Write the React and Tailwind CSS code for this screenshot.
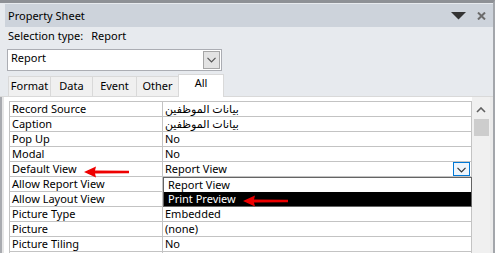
import React from "react";

const rows = [
  ["Record Source", "بيانات الموظفين", true],
  ["Caption", "بيانات الموظفين", true],
  ["Pop Up", "No"],
  ["Modal", "No"],
  ["Default View", "Report View"],
  ["Allow Report View", ""],
  ["Allow Layout View", ""],
  ["Picture Type", "Embedded"],
  ["Picture", "(none)"],
  ["Picture Tiling", "No"],
  ["", ""],
];

function Chevron({ className }) {
  return (
    <svg width="9" height="6" viewBox="0 0 9 6" className={className}>
      <path d="M0.5 0.8 L4.5 4.8 L8.5 0.8" fill="none" stroke="currentColor" strokeWidth="1.2" />
    </svg>
  );
}

function RedArrow({ className }) {
  return (
    <svg width="46" height="12" viewBox="0 0 46 12" className={className}>
      <polygon points="0,6 12,0.5 11,4.5 45,4.8 45,7.2 11,7.5 12,11.5" fill="#ee0000" />
    </svg>
  );
}

export default function App() {
  return (
    <div
      className="relative w-[495px] h-[253px] overflow-hidden bg-[#e7eaee] border-t-[3px] border-t-[#8e9196] border-r-2 border-r-[#a3a6ab] text-[11px] text-black"
      style={{ fontFamily: '"Noto Sans", "DejaVu Sans", sans-serif' }}
    >
      <div className="pt-[1px] pl-[5px]">
        {/* title bar */}
        <div className="h-[23px] bg-[#cdd3db] flex items-center pl-[3px] leading-[23px]">
          <span className="flex-1">Property Sheet</span>
          <svg width="15" height="8" viewBox="0 0 15 8" className="mr-[11px] mt-[1px]">
            <polygon points="0,0 15,0 7.5,7.5" fill="#333" />
          </svg>
          <svg width="9" height="8" viewBox="0 0 9 8" className="mr-[7px] mt-[1px]">
            <path d="M1 0.5 L8 7.5 M8 0.5 L1 7.5" stroke="#6b6b6b" strokeWidth="2" />
          </svg>
        </div>
        {/* selection type */}
        <div className="h-[17px] flex items-center pl-[3px] leading-[17px]">
          <span>Selection type:</span>
          <span className="ml-[8px]">Report</span>
        </div>
        {/* combobox */}
        <div className="mt-[5px] ml-[2px] w-[215px] h-[22px] bg-white border border-[#abadb3] flex items-start">
          <span className="flex-1 pl-[3px] pt-[1px] leading-[14px]">Report</span>
          <div className="mt-[1px] mr-[1px] w-[17px] h-[18px] bg-[#e3e3e3] border border-[#a6a6a6] flex items-center justify-center text-[#555]">
            <Chevron />
          </div>
        </div>
        {/* tabs */}
        <div className="mt-[3px] h-[22px] flex items-end pl-[3px]">
          {[
            ["Format", 42],
            ["Data", 42],
            ["Event", 44],
            ["Other", 42],
          ].map(([t, w]) => (
            <div
              key={t}
              className="h-[20px] bg-[#f0f0f0] border-t border-l border-[#d9d9d9] text-center leading-[14px] pt-[2px]"
              style={{ width: w }}
            >
              {t}
            </div>
          ))}
          <div className="relative z-10 w-[46px] h-[23px] -mb-[1px] bg-white border-t border-l border-r border-[#d9d9d9] text-center leading-[14px] pt-[1px]">
            All
          </div>
        </div>
      </div>
      {/* white content container */}
      <div className="flex border-t border-t-[#d9d9d9] h-[160px]">
        <div className="w-[2px] bg-[#a9abb0]" />
        <div className="w-[2px] bg-[#e6e6e6]" />
        <div className="bg-white pl-[5px] pt-[4px] flex">
          <div className="relative w-[463px] border-t border-l border-r border-[#c3c3c3]">
            {rows.map(([label, value, rtl], i) => (
              <div key={i} className="flex h-[15px] border-b border-[#c3c3c3] leading-[14px]">
                <div className="w-[153px] border-r border-[#c3c3c3] pl-[2px] whitespace-nowrap overflow-hidden">
                  {label}
                </div>
                <div className="relative flex-1 pl-[2px] whitespace-nowrap overflow-hidden">
                  {rtl ? <span dir="rtl">{value}</span> : value}
                  {i === 4 && (
                    <div className="absolute right-[1px] top-0 w-[17px] h-[14px] bg-[#eef5fc] border border-[#0078d7] flex items-center justify-center text-[#333]">
                      <Chevron className="mt-[2px]" />
                    </div>
                  )}
                </div>
              </div>
            ))}
            {/* dropdown list */}
            <div className="absolute z-20 left-[153px] top-[75px] w-[309px] h-[30px] bg-white border border-[#646464]">
              <div className="h-[14px] pl-[4px] leading-[13px] overflow-hidden">Report View</div>
              <div className="h-[14px] pl-[4px] bg-black text-white leading-[14px] overflow-hidden">Print Preview</div>
            </div>
          </div>
        </div>
        {/* scrollbar */}
        <div className="w-[18px] bg-[#f0f0f0] pt-[4px] flex flex-col items-center">
          <svg width="10" height="6" viewBox="0 0 10 6" className="mt-[6px]">
            <path d="M1 5 L5 1 L9 5" fill="none" stroke="#606060" strokeWidth="1.6" />
          </svg>
          <div className="mt-[6px] w-[15px] h-[17px] bg-[#cdcdcd]" />
        </div>
        <div className="flex-1 bg-[#ebebeb]" />
      </div>
      {/* annotation arrows */}
      <RedArrow className="absolute z-30 left-[84px] top-[163px]" />
      <RedArrow className="absolute z-30 left-[243px] top-[192px]" />
    </div>
  );
}
